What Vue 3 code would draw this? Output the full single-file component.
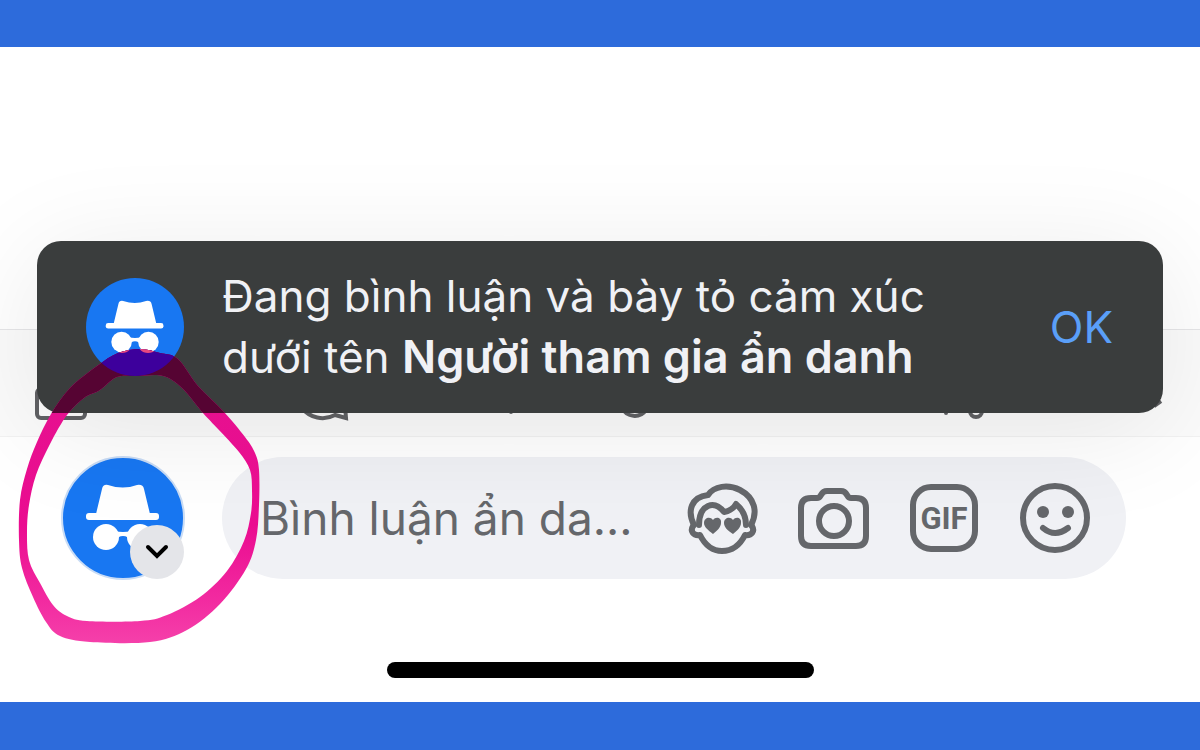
<script setup>
import { ref } from 'vue'

const comment = ref('')
const toastOpen = ref(true)

// Turns a closed list of points into a smooth Catmull-Rom curve.
function smoothLoop(points) {
  const n = points.length
  const at = (i) => points[(i + n) % n]
  let d = `M${points[0].join(' ')}`
  for (let i = 0; i < n; i++) {
    const [a, b, c, e] = [at(i - 1), at(i), at(i + 1), at(i + 2)]
    const first = [b[0] + (c[0] - a[0]) / 6, b[1] + (c[1] - a[1]) / 6]
    const second = [c[0] - (e[0] - b[0]) / 6, c[1] - (e[1] - b[1]) / 6]
    d += ` C${first.join(' ')} ${second.join(' ')} ${c.join(' ')}`
  }
  return d + ' Z'
}

const outerEdge = [
  [140, 349], [160, 353], [178, 359], [198, 386], [224, 412], [245, 437],
  [255, 453], [259, 470], [259, 505], [256, 540], [246, 569], [220, 604],
  [187, 630], [150, 642], [90, 642], [60, 636], [46, 622], [33, 597],
  [22, 568], [19, 540], [20, 500], [27, 469], [37, 442], [51, 414],
  [70, 388], [97, 366], [118, 353]
]
const innerEdge = [
  [138, 376], [117, 377], [100, 390], [84, 398], [67, 415], [50, 444],
  [36, 475], [29, 505], [27, 532], [29, 560], [40, 583], [53, 605],
  [67, 616], [87, 621], [140, 621], [167, 615], [200, 597], [227, 571],
  [244, 541], [251, 513], [252, 490], [250, 470], [239, 452], [218, 429],
  [203, 413], [182, 388], [163, 376]
]
const ringPath = smoothLoop(outerEdge) + ' ' + smoothLoop(innerEdge)
</script>

<template>
  <div class="page">
    <main class="screen">
      <section class="feed">
        <div class="actions" aria-hidden="true">
          <svg class="action" viewBox="0 0 60 60">
            <rect x="2" y="29" width="48" height="29" rx="4" />
          </svg>
          <svg class="action" viewBox="0 0 60 60">
            <path d="M2 48 A26 26 0 0 0 35 55 L46 58 L45 46" />
            <circle class="dot" cx="211" cy="52" r="2" />
          </svg>
          <svg class="action" viewBox="0 0 60 60">
            <path d="M2 48 A14 14 0 0 0 26 50" />
          </svg>
          <svg class="action" viewBox="0 0 60 60">
            <circle class="dot" cx="6" cy="53" r="2" />
            <circle cx="36" cy="51" r="6" />
            <path d="M214 46 L221 41" />
          </svg>
        </div>

        <div v-if="toastOpen" class="toast" role="status">
          <svg class="toast-avatar" viewBox="0 0 124 124" aria-hidden="true">
            <circle cx="62" cy="62" r="62" fill="#1877f2" />
            <g fill="#fff">
              <path d="M35 58 L41 33 Q42 28 47 29 Q62 34 76 29 Q82 28 83 33 L89 58 Z" />
              <rect x="25" y="57" width="73" height="7" rx="3" />
              <circle cx="45" cy="81" r="13" />
              <circle cx="79" cy="81" r="13" />
              <path d="M54 75 Q62 77 70 75 L70 85 Q67 80 62 80 Q57 80 54 85 Z" />
            </g>
          </svg>
          <p class="toast-text">
            Đang bình luận và bày tỏ cảm xúc<br />
            dưới tên <strong>Người tham gia ẩn danh</strong>
          </p>
          <button class="toast-ok" type="button" @click="toastOpen = false">OK</button>
        </div>
      </section>

      <section class="composer">
        <div class="composer-row">
          <button class="profile" type="button" aria-label="Người tham gia ẩn danh">
            <svg viewBox="0 0 124 124" aria-hidden="true">
              <circle cx="62" cy="62" r="61" fill="#1877f2" stroke="#c9dcf5" stroke-width="2" />
              <g fill="#fff">
                <path d="M35 58 L41 33 Q42 28 47 29 Q62 34 76 29 Q82 28 83 33 L89 58 Z" />
                <rect x="25" y="57" width="73" height="7" rx="3" />
                <circle cx="45" cy="81" r="13" />
                <circle cx="79" cy="81" r="13" />
                <path d="M54 75 Q62 77 70 75 L70 85 Q67 80 62 80 Q57 80 54 85 Z" />
              </g>
              <circle cx="96" cy="96" r="27" fill="#e4e5e9" />
              <path d="M87 91 L96 100 L105 91" fill="none" stroke="#000" stroke-width="4" stroke-linecap="round" />
            </svg>
          </button>

          <div class="field">
            <input v-model="comment" type="text" placeholder="Bình luận ẩn da..." aria-label="Bình luận ẩn danh" />

            <button class="tool" type="button" aria-label="Avatar">
              <svg viewBox="0 0 72 72" aria-hidden="true">
                <g fill="none" stroke="#65676b" stroke-width="6" stroke-linejoin="round" stroke-linecap="round">
                  <path d="M8 43 C1 29 5 15 22 13 C28 4 42 2 54 8 C69 16 72 30 65 43" />
                  <path d="M13 43 C13 34 15 27 22 24 C29 21 34 25 38 30 C43 29 48 26 50 22 C56 27 60 34 60 43" />
                  <path d="M7 44 C4 49 7 54 14 53 C19 63 26 69 36 69 C46 69 54 63 59 53 C66 54 69 49 66 44" />
                </g>
                <g fill="#65676b">
                  <path d="M27 52 C22 48 18 45 18 41 C18 36 24 34 27 38 C30 34 36 36 35 41 C35 45 31 49 27 52 Z" />
                  <path d="M47 52 C42 49 38 45 38 41 C38 36 44 34 47 38 C50 34 56 36 55 41 C55 45 51 49 47 52 Z" />
                </g>
              </svg>
            </button>

            <button class="tool" type="button" aria-label="Máy ảnh">
              <svg viewBox="0 0 72 72" aria-hidden="true">
                <g fill="none" stroke="#65676b" stroke-width="6" stroke-linejoin="round">
                  <path d="M14 16 H20 C25 16 23 9 30 9 H44 C51 9 49 16 54 16 H59 Q69 16 69 26 V54 Q69 64 59 64 H14 Q4 64 4 54 V26 Q4 16 14 16 Z" />
                  <circle cx="37" cy="39" r="15" />
                </g>
              </svg>
            </button>

            <button class="tool" type="button" aria-label="GIF">
              <svg viewBox="0 0 72 72" aria-hidden="true">
                <rect x="5" y="5" width="62" height="62" rx="18" fill="none" stroke="#65676b" stroke-width="6" />
                <text class="gif" x="36" y="47" text-anchor="middle">GIF</text>
              </svg>
            </button>

            <button class="tool" type="button" aria-label="Biểu tượng cảm xúc">
              <svg viewBox="0 0 72 72" aria-hidden="true">
                <circle cx="36" cy="36" r="32" fill="none" stroke="#65676b" stroke-width="6" />
                <circle cx="24" cy="30" r="6" fill="#65676b" />
                <circle cx="49" cy="30" r="6" fill="#65676b" />
                <path d="M24 46 Q36 56 49 46" fill="none" stroke="#65676b" stroke-width="6" stroke-linecap="round" />
              </svg>
            </button>
          </div>
        </div>
        <div class="home-indicator"></div>
      </section>

      <svg class="marker" viewBox="0 340 280 362" aria-hidden="true">
        <defs>
          <linearGradient id="ink" x1="0" y1="0" x2="0" y2="1">
            <stop offset="0" stop-color="#e5128f" />
            <stop offset="0.6" stop-color="#ea0c90" />
            <stop offset="0.85" stop-color="#f22aa0" />
            <stop offset="1" stop-color="#f540aa" />
          </linearGradient>
          <clipPath id="over-toast"><rect x="37" y="340" width="243" height="73" /></clipPath>
          <clipPath id="over-avatar"><circle cx="135" cy="327" r="49" /></clipPath>
          <clipPath id="over-lenses">
            <circle cx="122" cy="342" r="11" />
            <circle cx="148" cy="342" r="11" />
          </clipPath>
        </defs>
        <path :d="ringPath" fill="url(#ink)" fill-rule="evenodd" />
        <path :d="ringPath" fill="#560433" fill-rule="evenodd" clip-path="url(#over-toast)" />
        <path :d="ringPath" fill="#3d009c" fill-rule="evenodd" clip-path="url(#over-avatar)" />
        <path :d="ringPath" fill="#e8487f" fill-rule="evenodd" clip-path="url(#over-lenses)" />
      </svg>
    </main>
  </div>
</template>

<style>
body {
  margin: 0;
}
</style>

<style scoped>
.page {
  box-sizing: border-box;
  min-height: 100vh;
  display: flex;
  flex-direction: column;
  padding: 47px 0 48px;
  background: #2d6bdb;
  font-family: Inter, "Liberation Sans", sans-serif;
}

.screen {
  position: relative;
  flex: 1;
  display: flex;
  flex-direction: column;
  overflow: hidden;
  background: #fff;
}

.feed {
  position: relative;
  z-index: 1;
  flex: 1;
  display: flex;
  flex-direction: column;
  justify-content: flex-end;
}

.actions {
  display: grid;
  grid-template-columns: 265fr 320fr 320fr 260fr;
  align-items: end;
  box-sizing: border-box;
  height: 108px;
  padding: 0 0 16px 35px;
  border-top: 1px solid #e6e6e8;
  border-bottom: 1px solid #f2f2f2;
  background: #fbfbfb;
}

.action {
  width: 60px;
  height: 60px;
  overflow: visible;
  fill: none;
  stroke: #606164;
  stroke-width: 4;
}

.action .dot {
  fill: #606164;
  stroke: none;
}

.toast {
  position: absolute;
  right: 37px;
  bottom: 24px;
  left: 37px;
  display: flex;
  align-items: center;
  gap: 38px;
  box-sizing: border-box;
  padding: 25px 50px 25px 49px;
  border-radius: 24px;
  background: #3a3d3d;
  box-shadow: 0 16px 112px rgba(0, 0, 0, 0.09);
}

.toast-avatar {
  flex: none;
  width: 98px;
  height: 98px;
}

.toast-text {
  flex: 1;
  margin: 0;
  color: #f0f1f5;
  font-size: 44px;
  line-height: 61px;
  white-space: nowrap;
}

.toast-text strong {
  font-size: 45px;
  font-weight: 600;
  line-height: 1;
}

.toast-ok {
  padding: 0;
  border: 0;
  background: none;
  color: #5a9ff8;
  font: inherit;
  font-size: 44px;
  line-height: 61px;
}

.composer {
  display: flex;
  flex-direction: column;
  align-items: center;
  gap: 82px;
  padding: 19px 0 24px;
}

.composer-row {
  display: flex;
  align-items: center;
  align-self: stretch;
  gap: 37px;
  padding: 0 74px 0 61px;
}

.profile,
.tool {
  flex: none;
  padding: 0;
  border: 0;
  background: none;
}

.profile svg,
.tool svg {
  display: block;
  width: 100%;
}

.profile {
  width: 124px;
}

.field {
  flex: 1;
  min-width: 0;
  display: flex;
  align-items: center;
  gap: 39px;
  box-sizing: border-box;
  height: 122px;
  padding: 0 35px 0 38px;
  border-radius: 61px;
  background: #f0f1f5;
}

.field input {
  flex: 1;
  min-width: 0;
  padding: 0;
  border: 0;
  outline: 0;
  background: none;
  color: #1c1e21;
  font: inherit;
  font-size: 46px;
  line-height: 61px;
}

.field input::placeholder {
  color: #65676b;
  opacity: 1;
}

.tool {
  width: 72px;
}

.gif {
  fill: #65676b;
  font-family: Roboto, "Liberation Sans", sans-serif;
  font-size: 31px;
  font-weight: 700;
}

.home-indicator {
  width: 427px;
  height: 16px;
  border-radius: 8px;
  background: #000;
}

.marker {
  position: absolute;
  bottom: 0;
  left: 0;
  z-index: 2;
  width: 280px;
  height: 362px;
  pointer-events: none;
}
</style>
